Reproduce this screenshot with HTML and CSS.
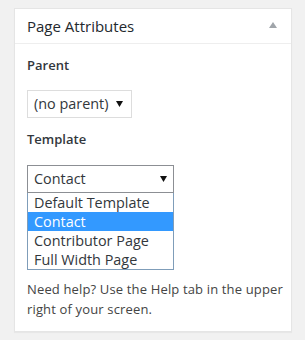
FILE: index.html
```html
<!DOCTYPE html>
<html>
<head>
<meta charset="utf-8">
<link rel="stylesheet" href="styles.css">
</head>
<body>
<div class="postbox">
  <div class="hndle">
    <h2 class="title">Page Attributes</h2>
    <svg class="toggle" width="8" height="6" viewBox="0 0 8 6"><polygon points="4,0 8,6 0,6" fill="#a0a5aa"/></svg>
  </div>
  <div class="inside">
    <p class="label">Parent</p>
    <div class="select select-parent">
      <span class="value">(no parent)</span>
      <svg class="arrow" width="7" height="6" viewBox="0 0 7 6"><polygon points="0,0 7,0 3.5,6" fill="#111"/></svg>
    </div>
    <p class="label label-template">Template</p>
    <div class="select select-template open">
      <span class="value">Contact</span>
      <svg class="arrow" width="7" height="6" viewBox="0 0 7 6"><polygon points="0,0 7,0 3.5,6" fill="#111"/></svg>
    </div>
    <ul class="listbox">
      <li>Default Template</li>
      <li class="selected">Contact</li>
      <li>Contributor Page</li>
      <li>Full Width Page</li>
    </ul>
    <p class="help">Need help? Use the Help tab in the upper<br>right of your screen.</p>
  </div>
</div>
</body>
</html>
```
FILE: styles.css
```css
* { box-sizing: border-box; }
body {
  margin: 0;
  background: #f1f1f1;
  font-family: "Open Sans", "Liberation Sans", sans-serif;
  color: #23282d;
  width: 305px;
  height: 340px;
}
.postbox {
  margin: 8px 0 0 14px;
  width: 278px;
  height: 324px;
  background: #fff;
  border: 1px solid #e5e5e5;
  box-shadow: 0 1px 1px rgba(0,0,0,0.04);
}
.hndle {
  display: flex;
  align-items: center;
  justify-content: space-between;
  height: 35px;
  padding: 0 14px 0 12px;
  border-bottom: 1px solid #eee;
}
.title {
  margin: 0;
  font-size: 15px;
  font-weight: 400;
  line-height: 20px;
  color: #23282d;
}
.toggle { display: block; margin-top: -2px; }
.inside {
  padding: 12px 12px 0 12px;
  font-size: 13px;
  line-height: 1.4;
}
.label {
  margin: 0;
  font-weight: 600;
  font-size: 13px;
  line-height: 18px;
  color: #32373c;
}
.label-template { margin-top: 12px; }
.select {
  display: flex;
  align-items: center;
  justify-content: space-between;
  height: 28px;
  margin-top: 16px;
  padding: 0 8px 0 6px;
  border: 1px solid #ddd;
  background: #fff;
  font-size: 14.4px;
  color: #32373c;
}
.select .value { line-height: 20px; }
.select .arrow { display: block; }
.select-parent { width: 105px; }
.select-template {
  width: 147px;
  margin-top: 17px;
  border-color: #8c8f94;
  padding-right: 6px;
}
.listbox {
  list-style: none;
  margin: 0;
  padding: 0;
  width: 147px;
  border: 1px solid #7f9db9;
  border-top: 0;
  font-size: 14.4px;
  color: #32373c;
}
.listbox li {
  height: 19px;
  line-height: 19px;
  padding-left: 6px;
}
.listbox li.selected {
  background: #3399ff;
  color: #fff;
}
.help {
  margin: 9px -8px 0 0;
  font-size: 13px;
  letter-spacing: 0.15px;
  line-height: 20px;
  color: #444;
  white-space: nowrap;
}
```
